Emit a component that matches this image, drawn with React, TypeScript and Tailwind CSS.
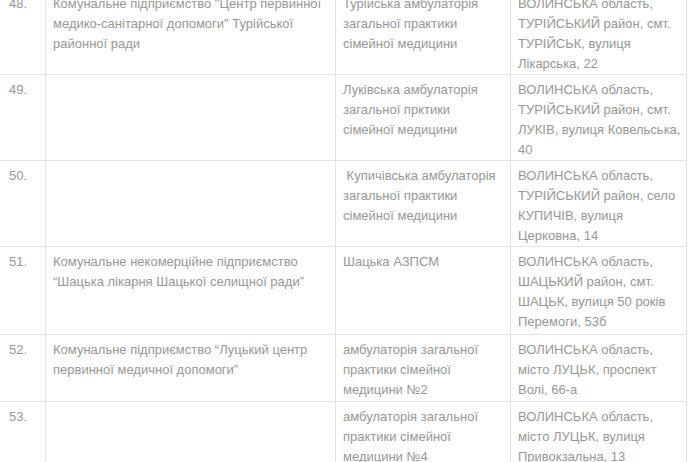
import React from 'react';

interface Clinic {
  nr: string;
  owner: string;
  name: string;
  address: string;
  h: string;
}

const rows: Clinic[] = [
  {
    nr: '48.',
    owner: 'Комунальне підприємство "Центр первинної медико-санітарної допомоги" Турійської районної ради',
    name: 'Турійська амбулаторія загальної практики сімейної медицини',
    address: 'ВОЛИНСЬКА область, ТУРІЙСЬКИЙ район, смт. ТУРІЙСЬК, вулиця Лікарська, 22',
    h: 'h-[86px]',
  },
  {
    nr: '49.',
    owner: '',
    name: 'Луківська амбулаторія загальної прктики сімейної медицини',
    address: 'ВОЛИНСЬКА область, ТУРІЙСЬКИЙ район, смт. ЛУКІВ, вулиця Ковельська, 40',
    h: 'h-[86px]',
  },
  {
    nr: '50.',
    owner: '',
    name: '\u00a0Купичівська амбулаторія загальної практики сімейної медицини',
    address: 'ВОЛИНСЬКА область, ТУРІЙСЬКИЙ район, село КУПИЧІВ, вулиця Церковна, 14',
    h: 'h-[83px]',
  },
  {
    nr: '51.',
    owner: 'Комунальне некомерційне підприємство “Шацька лікарня Шацької селищної ради”',
    name: 'Шацька АЗПСМ',
    address: 'ВОЛИНСЬКА область, ШАЦЬКИЙ район, смт. ШАЦЬК, вулиця 50 років Перемоги, 53б',
    h: 'h-[88px]',
  },
  {
    nr: '52.',
    owner: 'Комунальне підприємство “Луцький центр первинної медичної допомоги”',
    name: 'амбулаторія загальної практики сімейної медицини №2',
    address: 'ВОЛИНСЬКА область, місто ЛУЦЬК, проспект Волі, 66-а',
    h: 'h-[67px]',
  },
  {
    nr: '53.',
    owner: '',
    name: 'амбулаторія загальної практики сімейної медицини №4',
    address: 'ВОЛИНСЬКА область, місто ЛУЦЬК, вулиця Привокзальна, 13',
    h: 'h-[80px]',
  },
];

export default function App() {
  return (
    <div className="w-[689px] h-[462px] overflow-hidden bg-white font-['Liberation_Sans',Arial,sans-serif] text-[13px] leading-[20px] text-[#979797]">
      <div className="-mt-[12px]">
        <table className="table-fixed border-collapse w-[687px] -ml-px">
          <colgroup>
            <col className="w-[46px]" />
            <col className="w-[290px]" />
            <col className="w-[175px]" />
            <col className="w-[176px]" />
          </colgroup>
          <tbody>
            {rows.map((r) => (
              <tr key={r.nr} className={r.h}>
                <td className="border border-[#e3e3e3] align-top pt-[5px] pl-[9px] pr-1">{r.nr}</td>
                <td className="border border-[#e3e3e3] align-top pt-[5px] pl-[7px] pr-1">{r.owner}</td>
                <td className="border border-[#e3e3e3] align-top pt-[5px] pl-[7px] pr-[12px]">{r.name}</td>
                <td className="border border-[#e3e3e3] align-top pt-[5px] pl-[7px] pr-[2px]">{r.address}</td>
              </tr>
            ))}
          </tbody>
        </table>
      </div>
    </div>
  );
}
